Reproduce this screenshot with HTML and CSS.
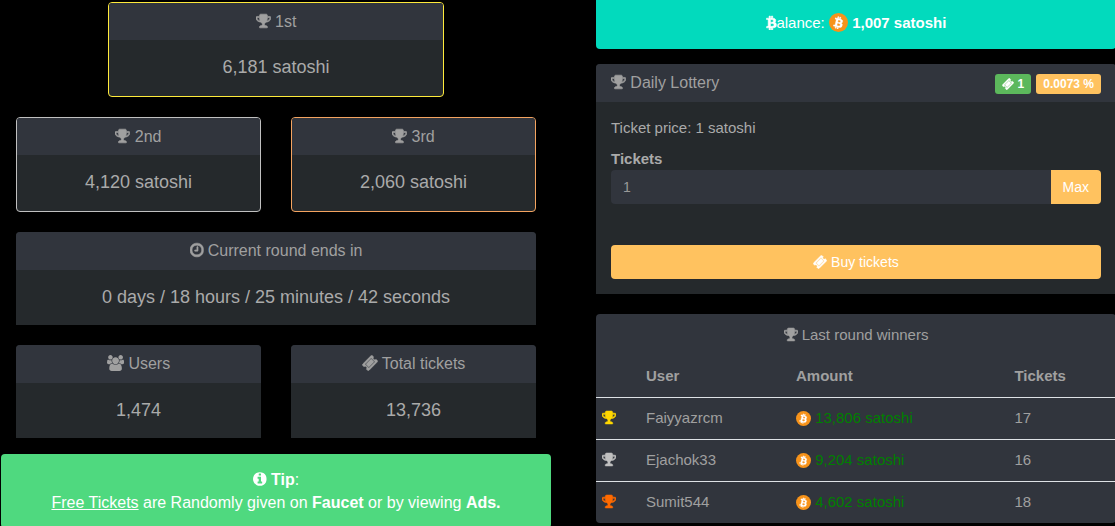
FILE: index.html
```
<!DOCTYPE html>
<html lang="en">
<head>
    <meta charset="UTF-8">
    <meta name="viewport" content="width=device-width, initial-scale=1.0">
    <title>Daily Lottery</title>
    <link rel="stylesheet" href="styles.css">
</head>
<body>

    <!-- Icon shapes -->
    <svg class="sprite" aria-hidden="true">
        <symbol id="trophy" viewBox="64 0 1664 1792">
            <path d="M522 883q-74-162-74-371h-256v96q0 78 94.5 162t235.5 113zm1078-275v-96h-256q0 209-74 371 141-29 235.5-113t94.5-162zm128-128v128q0 71-41.5 143t-112 130-173 97.5-215.5 44.5q-42 54-95 95-38 34-52.5 72.5t-14.5 89.5q0 54 30.5 91t97.5 37q75 0 133.5 45.5t58.5 114.5v64q0 14-9 23t-23 9h-832q-14 0-23-9t-9-23v-64q0-69 58.5-114.5t133.5-45.5q67 0 97.5-37t30.5-91q0-51-14.5-89.5t-52.5-72.5q-53-41-95-95-113-5-215.5-44.5t-173-97.5-112-130-41.5-143v-128q0-40 28-68t68-28h288v-96q0-66 47-113t113-47h576q66 0 113 47t47 113v96h288q40 0 68 28t28 68z"/>
        </symbol>
        <symbol id="clock" viewBox="128 0 1536 1792">
            <path d="M1024 544v448q0 14-9 23t-23 9h-320q-14 0-23-9t-9-23v-64q0-14 9-23t23-9h224v-352q0-14 9-23t23-9h64q14 0 23 9t9 23zm416 352q0-148-73-273t-198-198-273-73-273 73-198 198-73 273 73 273 198 198 273 73 273-73 198-198 73-273zm224 0q0 209-103 385.5t-279.5 279.5-385.5 103-385.5-103-279.5-279.5-103-385.5 103-385.5 279.5-279.5 385.5-103 385.5 103 279.5 279.5 103 385.5z"/>
        </symbol>
        <symbol id="info" viewBox="128 0 1536 1792">
            <path d="M1152 1376v-160q0-14-9-23t-23-9h-96v-512q0-14-9-23t-23-9h-320q-14 0-23 9t-9 23v160q0 14 9 23t23 9h96v320h-96q-14 0-23 9t-9 23v160q0 14 9 23t23 9h448q14 0 23-9t9-23zm-128-896v-160q0-14-9-23t-23-9h-192q-14 0-23 9t-9 23v160q0 14 9 23t23 9h192q14 0 23-9t9-23zm640 416q0 209-103 385.5t-279.5 279.5-385.5 103-385.5-103-279.5-279.5-103-385.5 103-385.5 279.5-279.5 385.5-103 385.5 103 279.5 279.5 103 385.5z"/>
        </symbol>
        <symbol id="ticket" viewBox="0 0 1792 1792">
            <path d="M1024 452l316 316-572 572-316-316zm-211 979l618-618q19-19 19-45t-19-45l-362-362q-18-18-45-18t-45 18l-618 618q-19 19-19 45t19 45l362 362q18 18 45 18t45-18zm889-637l-907 908q-37 37-90.5 37t-90.5-37l-126-126q56-56 56-136t-56-136-136-56-136 56l-125-126q-37-37-37-90.5t37-90.5l907-906q37-37 90.5-37t90.5 37l125 125q-56 56-56 136t56 136 136 56 136-56l126 125q37 37 37 90.5t-37 90.5z"/>
        </symbol>
        <symbol id="users" viewBox="0 0 1920 1792">
            <path d="M593 896q-162 5-265 128h-134q-82 0-138-40.5t-56-118.5q0-353 124-353 6 0 43.5 21t97.5 42.5 119 21.5q67 0 133-23-5 37-5 66 0 139 81 256zm1071 637q0 120-73 189.5t-194 69.5h-874q-121 0-194-69.5t-73-189.5q0-53 3.5-103.5t14-109 26.5-108.5 43-97.5 62-81 85.5-53.5 111.5-20q10 0 43 21.5t73 48 107 48 135 21.5 135-21.5 107-48 73-48 43-21.5q61 0 111.5 20t85.5 53.5 62 81 43 97.5 26.5 108.5 14 109 3.5 103.5zm-1024-1277q0 106-75 181t-181 75-181-75-75-181 75-181 181-75 181 75 75 181zm704 384q0 159-112.5 271.5t-271.5 112.5-271.5-112.5-112.5-271.5 112.5-271.5 271.5-112.5 271.5 112.5 112.5 271.5zm576 225q0 78-56 118.5t-138 40.5h-134q-103-123-265-128 81-117 81-256 0-29-5-66 66 23 133 23 59 0 119-21.5t97.5-42.5 43.5-21q124 0 124 353zm-128-609q0 106-75 181t-181 75-181-75-75-181 75-181 181-75 181 75 75 181z"/>
        </symbol>
        <symbol id="btc" viewBox="0 0 1280 1792">
            <path d="M1167 640q18 182-131 258 117 28 175 103t45 214q-7 71-32.5 125t-64.5 89-97 58.5-121.5 34.5-145.5 15v255h-154v-251q-80 0-122-1v252h-154v-255q-18 0-54-.5t-55-.5h-200l31-183h111q50 0 58-51v-402h16q-6-1-16-1v-287q-13-68-89-68h-111v-164l212 1q64 0 97-1v-252h154v247q82-2 122-2v-245h154v252q79 7 140 22.5t113 45 82.5 78 36.5 114.5zm-215 545q0-36-15-64t-37-46-57.5-30.5-65.5-18.5-74-9-69-3-64.5 1-47.5 1v338q8 0 37 .5t48 .5 53-1.5 58.5-4 57-8.5 55.5-14 47.5-21 39.5-30 24.5-40 9.5-51zm-71-476q0-33-12.5-58.5t-30.5-42-48-28-55-16.5-61.5-8-58-2.5-54 1-39.5.5v307q5 0 34.5.5t46.5 0 50-2 55-5.5 51.5-11 48.5-18.5 37-27 27-38.5 9-51z"/>
        </symbol>
        <symbol id="coin" viewBox="0 0 32 32">
            <circle cx="16" cy="16" r="16" fill="#f7931a"/>
            <g transform="rotate(14 16 16)" fill="#fff" stroke="#fff" stroke-width="50">
                <use href="#btc" x="8" y="5" width="16" height="22"/>
            </g>
        </symbol>
    </svg>

    <main class="page">
        <div class="left">
            <div class="cards">
                <section class="card bordered card-first">
                    <h2><svg class="icon trophy"><use href="#trophy"/></svg> 1st</h2>
                    <p>6,181 satoshi</p>
                </section>
                <section class="card bordered card-second">
                    <h2><svg class="icon trophy"><use href="#trophy"/></svg> 2nd</h2>
                    <p>4,120 satoshi</p>
                </section>
                <section class="card bordered card-third">
                    <h2><svg class="icon trophy"><use href="#trophy"/></svg> 3rd</h2>
                    <p>2,060 satoshi</p>
                </section>
                <section class="card card-wide">
                    <h2><svg class="icon round"><use href="#clock"/></svg> Current round ends in</h2>
                    <p>0 days / 18 hours / 25 minutes / 42 seconds</p>
                </section>
                <section class="card">
                    <h2><svg class="icon users"><use href="#users"/></svg> Users</h2>
                    <p>1,474</p>
                </section>
                <section class="card">
                    <h2><svg class="icon"><use href="#ticket"/></svg> Total tickets</h2>
                    <p>13,736</p>
                </section>
            </div>

            <div class="tip">
                <svg class="icon info"><use href="#info"/></svg> <b>Tip</b>:<br>
                <a href="#">Free Tickets</a> are Randomly given on <b>Faucet</b> or by viewing <b>Ads.</b>
            </div>
        </div>

        <div class="right">
            <div class="balance">
                <svg class="icon btc"><use href="#btc"/></svg>alance:
                <svg class="coin-large"><use href="#coin"/></svg> <b>1,007 satoshi</b>
            </div>

            <section class="lottery">
                <div class="lottery-header">
                    <h2><svg class="icon trophy"><use href="#trophy"/></svg> Daily Lottery</h2>
                    <span class="badge badge-green"><svg class="icon"><use href="#ticket"/></svg> 1</span>
                    <span class="badge">0.0073 %</span>
                </div>
                <form class="lottery-body">
                    <p>Ticket price: 1 satoshi</p>
                    <label for="tickets">Tickets</label>
                    <div class="input-group">
                        <input type="text" id="tickets" value="1">
                        <button type="button">Max</button>
                    </div>
                    <button type="button" class="buy"><svg class="icon"><use href="#ticket"/></svg> Buy tickets</button>
                </form>
            </section>

            <section class="winners">
                <h2><svg class="icon trophy"><use href="#trophy"/></svg> Last round winners</h2>
                <table>
                    <thead>
                        <tr>
                            <th class="col-place"></th>
                            <th class="col-user">User</th>
                            <th class="col-amount">Amount</th>
                            <th>Tickets</th>
                        </tr>
                    </thead>
                    <tbody>
                        <tr>
                            <td><svg class="icon trophy gold"><use href="#trophy"/></svg></td>
                            <td>Faiyyazrcm</td>
                            <td class="amount"><svg class="coin"><use href="#coin"/></svg> 13,806 satoshi</td>
                            <td>17</td>
                        </tr>
                        <tr>
                            <td><svg class="icon trophy silver"><use href="#trophy"/></svg></td>
                            <td>Ejachok33</td>
                            <td class="amount"><svg class="coin"><use href="#coin"/></svg> 9,204 satoshi</td>
                            <td>16</td>
                        </tr>
                        <tr>
                            <td><svg class="icon trophy bronze"><use href="#trophy"/></svg></td>
                            <td>Sumit544</td>
                            <td class="amount"><svg class="coin"><use href="#coin"/></svg> 4,602 satoshi</td>
                            <td>18</td>
                        </tr>
                    </tbody>
                </table>
            </section>
        </div>
    </main>

</body>
</html>
```

FILE: styles.css
```
:root {
    --panel: #31353d;
    --panelBody: #25292c;
    --text: #aaa;
    --yellow: #ffc25f;
}

* {
    box-sizing: border-box;
}

body {
    margin: 0;
    background: #000;
    color: var(--text);
    font-family: "Liberation Sans", Arial, sans-serif;
    font-size: 15px;
    line-height: 22px;
    overflow-x: hidden;
}

h2, p {
    margin: 0;
    font-weight: normal;
}

.sprite {
    display: none;
}

/* Icons scale with the text next to them */
.icon {
    width: 1em;
    height: 1em;
    fill: currentColor;
    stroke: currentColor;
    stroke-width: 70px;
    vertical-align: -0.14em;
    overflow: visible;
}

.trophy {
    width: 0.93em;
}

.round, .info {
    width: 0.86em;
}

.users, .info {
    stroke: none;
}

.users {
    width: 1.07em;
}

.btc {
    width: 0.72em;
}

.page {
    display: grid;
    grid-template-columns: 1fr 1fr;
    column-gap: 60px;
    margin-right: -1px;
    padding-left: 16px;
}

/* Left column */
.cards {
    display: grid;
    grid-template-columns: repeat(12, 1fr);
    gap: 20px 30px;
    padding-top: 2px;
}

.card {
    grid-column: span 6;
    background: var(--panelBody);
    border-radius: 4px 4px 0 0;
    overflow: hidden;
    text-align: center;
}

.card h2 {
    background: var(--panel);
    color: #a0a0a0;
    padding: 8px 15px;
    font-size: 16px;
}

.card p {
    padding: 15px;
    font-size: 18px;
    line-height: 25px;
}

.bordered {
    border: 1px solid;
    border-radius: 4px;
}

.bordered h2 {
    padding-bottom: 7px;
}

.bordered p {
    padding-bottom: 16px;
}

.card-first {
    grid-column: 3 / span 8;
    border-color: #ffeb3b;
}

.card-second {
    border-color: #c0c0c0;
}

.card-third {
    border-color: #f4a460;
}

.card-wide {
    grid-column: span 12;
}

.tip {
    margin: 16px -15px 0;
    padding: 14px 15px;
    border-radius: 4px;
    background: #4fd97f;
    color: #fff;
    font-size: 16px;
    line-height: 23px;
    text-align: center;
}

.tip a {
    color: #fff;
}

/* Right column */
.balance {
    height: 49px;
    padding-top: 12px;
    border-radius: 0 0 4px 4px;
    background: #02dabd;
    color: #fff;
    text-align: center;
}

.coin-large {
    width: 19px;
    height: 19px;
    vertical-align: -4px;
}

.lottery {
    margin-top: 15px;
    background: var(--panelBody);
    border-radius: 4px 4px 0 0;
    overflow: hidden;
}

.lottery-header {
    display: flex;
    align-items: flex-end;
    gap: 5px;
    padding: 8px 15px;
    background: var(--panel);
}

.lottery-header h2 {
    flex: 1;
    color: #a0a0a0;
    font-size: 16px;
}

.badge {
    padding: 0 7px;
    border-radius: 3px;
    background: var(--yellow);
    color: #fff;
    font-size: 12px;
    font-weight: bold;
    line-height: 20px;
}

.badge-green {
    background: #5cb85c;
}

.lottery-body {
    padding: 15px;
}

.lottery-body label {
    display: block;
    margin-top: 9px;
    font-weight: bold;
}

.input-group {
    display: flex;
    margin-bottom: 41px;
}

input, button {
    height: 34px;
    padding: 0 12px;
    border: 0;
    font-family: inherit;
    font-size: 14px;
}

input {
    flex: 1;
    min-width: 0;
    border-radius: 4px 0 0 4px;
    background: var(--panel);
    color: #999;
}

button {
    border-radius: 4px;
    background: var(--yellow);
    color: #fff;
    cursor: pointer;
}

.input-group button {
    border-radius: 0 4px 4px 0;
}

.buy {
    width: 100%;
}

.winners {
    margin-top: 20px;
    background: var(--panel);
    border-radius: 4px;
    color: #a0a0a0;
}

.winners h2 {
    padding: 10px 15px 9px;
    font-size: 15px;
    text-align: center;
}

table {
    width: 100%;
    table-layout: fixed;
    border-collapse: collapse;
}

th, td {
    height: 42px;
    padding: 0 6px;
    text-align: left;
}

td {
    border-top: 1px solid #dee2e6;
}

.col-place {
    width: 44px;
}

.col-user {
    width: 150px;
}

.col-amount {
    width: 42%;
}

.amount {
    color: #008000;
}

.coin {
    width: 15px;
    height: 15px;
    vertical-align: -3px;
}

.gold {
    color: #ffd700;
}

.silver {
    color: #c0c0c0;
}

.bronze {
    color: #ff6a00;
}
```
